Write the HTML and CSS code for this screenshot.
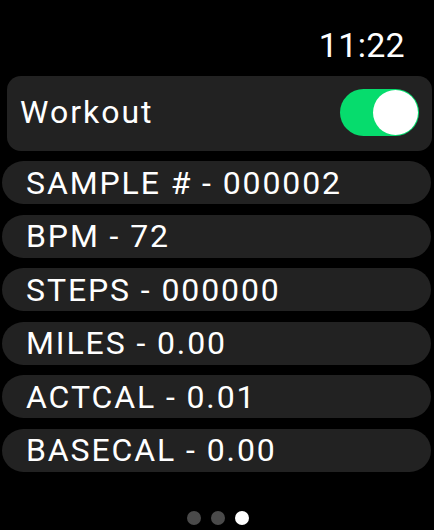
FILE: index.html
```html
<!DOCTYPE html>
<html>
<head>
<meta charset="utf-8">
<link rel="stylesheet" href="styles.css">
</head>
<body>
<div class="screen">
  <div class="status"><span class="time">11:22</span></div>
  <div class="card workout">
    <span class="label">Workout</span>
    <div class="toggle"><div class="knob"></div></div>
  </div>
  <div class="rows">
    <div class="row">SAMPLE # - 000002</div>
    <div class="row">BPM - 72</div>
    <div class="row">STEPS - 000000</div>
    <div class="row">MILES - 0.00</div>
    <div class="row">ACTCAL - 0.01</div>
    <div class="row">BASECAL - 0.00</div>
  </div>
  <div class="dots">
    <span class="dot"></span>
    <span class="dot"></span>
    <span class="dot active"></span>
  </div>
</div>
</body>
</html>
```
FILE: styles.css
```css
html, body {
  margin: 0;
  padding: 0;
  background: #000;
}
.screen {
  width: 434px;
  height: 530px;
  background: #000;
  color: #fff;
  font-family: Roboto, "Liberation Sans", sans-serif;
  display: flex;
  flex-direction: column;
  overflow: hidden;
}
.status {
  height: 76px;
  display: flex;
  justify-content: flex-end;
  align-items: flex-start;
  padding-right: 29px;
  box-sizing: border-box;
}
.time {
  font-size: 34px;
  font-weight: 400;
  letter-spacing: 0.3px;
  line-height: 40px;
  margin-top: 25px;
}
.card {
  background: #222222;
}
.workout {
  margin: 0 2px 0 7px;
  height: 75px;
  border-radius: 14px;
  display: flex;
  align-items: center;
  justify-content: space-between;
  padding: 0 13px 0 13px;
  box-sizing: border-box;
}
.label {
  font-size: 32px;
  letter-spacing: 2px;
  line-height: 36px;
  margin-top: -3px;
}
.toggle {
  width: 79px;
  height: 47px;
  border-radius: 23.5px;
  background: #06dc6d;
  position: relative;
  margin-top: -3px;
}
.knob {
  position: absolute;
  right: 1px;
  top: 1px;
  width: 45px;
  height: 45px;
  border-radius: 50%;
  background: #fff;
}
.rows {
  margin: 10px 3px 0 2px;
  display: flex;
  flex-direction: column;
  gap: 10.6px;
}
.row {
  height: 43px;
  border-radius: 21.5px;
  background: #222222;
  display: flex;
  align-items: center;
  padding-left: 24px;
  font-size: 32px;
  letter-spacing: 1.9px;
  line-height: 36px;
}
.dots {
  display: flex;
  justify-content: center;
  gap: 10px;
  margin-top: 39px;
  padding-left: 1px;
}
.dot {
  width: 14px;
  height: 14px;
  border-radius: 50%;
  background: #4a4a4a;
}
.dot.active {
  background: #fff;
}
```
